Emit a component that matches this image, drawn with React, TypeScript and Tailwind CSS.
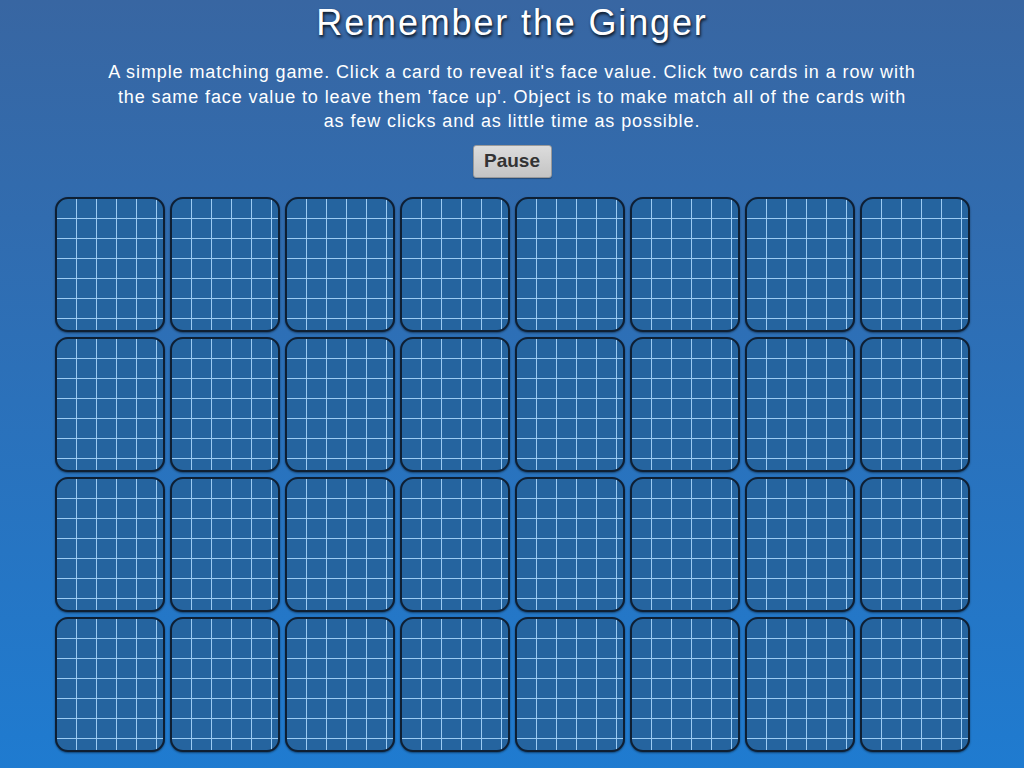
import React from "react";

const card =
  "h-[135px] rounded-[13px] border-2 border-[#0e1f33] bg-[#25649f] bg-[image:linear-gradient(to_right,transparent_19px,#9ccbf2_19px,#9ccbf2_20px,transparent_20px),linear-gradient(to_bottom,transparent_19px,#9ccbf2_19px,#9ccbf2_20px,transparent_20px)] bg-[size:20px_20px] shadow-[0_1px_2px_rgba(0,0,0,0.45)]";

export default function App() {
  const cards = Array.from({ length: 32 }, (_, i) => i);

  return (
    <div
      className="h-[768px] w-full overflow-hidden bg-[linear-gradient(to_bottom,#3866a2,#1f7bd0)] text-white"
      style={{ fontFamily: "'Liberation Sans', Arial, sans-serif" }}
    >
      {/* Header */}
      <div className="flex flex-col items-center">
        <h1 className="mt-[1px] text-[36px] leading-[44px] tracking-[1.85px] [text-shadow:1px_2px_3px_rgba(0,0,0,0.85)]">
          Remember the Ginger
        </h1>
        <p className="mt-[15px] w-[840px] text-center text-[18px] leading-[24.5px] tracking-[0.9px]">
          A simple matching game. Click a card to reveal it's face value. Click two cards in a row with
          <br />
          the same face value to leave them 'face up'. Object is to make match all of the cards with
          <br />
          as few clicks and as little time as possible.
        </p>
        <button className="mt-[11px] h-[33px] w-[79px] rounded-[3px] border border-[#9a9a9a] bg-[linear-gradient(to_bottom,#dcdcdc,#c4c4c4)] text-[19px] font-bold text-[#333] shadow-[0_1px_1px_rgba(0,0,0,0.3)]">
          Pause
        </button>
      </div>

      {/* Card grid */}
      <div className="mx-auto mt-[19px] grid w-[915px] grid-cols-8 gap-[5px]">
        {cards.map((c) => (
          <div key={c} className={card} />
        ))}
      </div>
    </div>
  );
}
